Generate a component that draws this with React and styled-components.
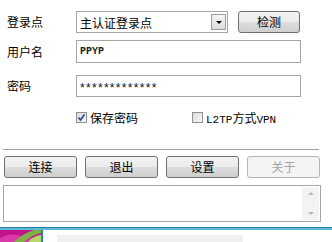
import React from 'react';
import styled, { createGlobalStyle } from 'styled-components';

const GlobalStyle = createGlobalStyle`
  html, body { margin: 0; padding: 0; background: #fff; }
  body { font-family: "Noto Sans CJK SC", "Liberation Sans", sans-serif; }
`;

const Window = styled.div`
  width: 332px;
  height: 242px;
  overflow: hidden;
  background: #fff;
  display: flex;
  flex-direction: column;
  font-size: 12px;
  color: #000;
`;

const Form = styled.div`
  display: flex;
  flex-direction: column;
  padding-top: 11px;
`;

const Row = styled.div`
  display: flex;
  align-items: center;
  height: ${p => p.h}px;
  margin-bottom: ${p => p.mb || 0}px;
`;

const Label = styled.div`
  width: 69px;
  padding-left: 7px;
  font-size: 12px;
  line-height: 14px;
`;

const Select = styled.div`
  box-sizing: border-box;
  width: 152px;
  height: 22px;
  border: 1px solid #a5a5a5;
  display: flex;
  align-items: center;
  justify-content: space-between;
  padding: 0 1px 0 3px;
  font-size: 12px;
`;

const DropBtn = styled.div`
  box-sizing: border-box;
  width: 15px;
  height: 16px;
  border: 1px solid #9a9a9a;
  background: linear-gradient(#f6f6f6, #dcdcdc);
  display: flex;
  align-items: center;
  justify-content: center;
`;

const Caret = styled.div`
  width: 0;
  height: 0;
  border-left: 3px solid transparent;
  border-right: 3px solid transparent;
  border-top: 3px solid #000;
`;

const Button = styled.button`
  box-sizing: border-box;
  width: ${p => p.w || 73}px;
  height: 22px;
  margin: 0;
  padding: 0;
  border: 1px solid ${p => (p.disabled ? '#b5b5b5' : '#707070')};
  border-radius: 3px;
  background: ${p => (p.disabled
    ? '#f4f4f4'
    : 'linear-gradient(#f3f3f3 0%, #ebebeb 50%, #dddddd 51%, #cfcfcf 100%)')};
  color: ${p => (p.disabled ? '#a3a3a3' : '#000')};
  font-family: "Noto Sans CJK SC", sans-serif;
  font-size: 12px;
  line-height: 20px;
`;

const Input = styled.div`
  box-sizing: border-box;
  width: 225px;
  height: ${p => p.h}px;
  border: 1px solid #a5a5a5;
  display: flex;
  align-items: center;
  padding-left: 3px;
  font-family: "Liberation Mono", monospace;
  font-size: 10px;
  font-weight: bold;
  color: #222;
`;

const Stars = styled.span`
  font-family: "Liberation Sans", sans-serif;
  font-size: 12px;
  font-weight: normal;
  letter-spacing: 1.3px;
  color: #111;
  padding-top: 3px;
`;

const CheckRow = styled.div`
  display: flex;
  align-items: center;
  height: 14px;
  padding-left: 76px;
`;

const Check = styled.label`
  display: flex;
  align-items: center;
  gap: 3px;
  width: ${p => p.w}px;
  font-size: 12px;
`;

const Box = styled.span`
  box-sizing: border-box;
  width: 11px;
  height: 11px;
  border: 1px solid #8e8f8f;
  background: linear-gradient(135deg, #dcdcdc, #f8f8f8);
  display: flex;
  align-items: center;
  justify-content: center;
`;

const Mono = styled.span`
  font-family: "Liberation Mono", monospace;
  font-size: 11px;
`;

const Separator = styled.div`
  margin: 25px 13px 0 3px;
  height: 1px;
  background: #a0a0a0;
`;

const ButtonRow = styled.div`
  display: flex;
  gap: 8px;
  padding: 6px 0 0 4px;
`;

const LogArea = styled.div`
  box-sizing: border-box;
  margin: 7px 0 0 3px;
  width: 318px;
  height: 41px;
  border: 1px solid #a5a5a5;
  display: flex;
  justify-content: flex-end;
  padding: 1px;
`;

const Scroll = styled.div`
  width: 17px;
  background: #f3f3f3;
  display: flex;
  flex-direction: column;
  justify-content: space-between;
  align-items: center;
  padding: 5px 0;
`;

const Arrow = styled.div`
  width: 0;
  height: 0;
  border-left: 3px solid transparent;
  border-right: 3px solid transparent;
  ${p => (p.up ? 'border-bottom: 3px solid #b8b8b8;' : 'border-top: 3px solid #b8b8b8;')}
`;

const Strip = styled.div`
  margin-top: 5px;
  display: flex;
  flex-direction: column;
`;

const BlueLine = styled.div`
  height: 2px;
  border-top: 1px solid #1f7fa6;
  background: #5fb8d8;
`;

const Taskbar = styled.div`
  display: flex;
  height: 12px;
  align-items: stretch;
`;

const Thumb = styled.div`
  width: 41px;
  display: flex;
`;

const Divider = styled.div`
  width: 2px;
  background: #1e86b2;
`;

const Tray = styled.div`
  margin: 5px 0 0 14px;
  width: 186px;
  background: #f0f0f0;
`;

export default function App() {
  return (
    <Window>
      <GlobalStyle />
      <Form>
        <Row h={22} mb={7}>
          <Label>登录点</Label>
          <Select>
            <span>主认证登录点</span>
            <DropBtn><Caret /></DropBtn>
          </Select>
          <div style={{ width: 10 }} />
          <Button w={62}>检测</Button>
        </Row>
        <Row h={23} mb={12}>
          <Label>用户名</Label>
          <Input h={23}>PPYP</Input>
        </Row>
        <Row h={22} mb={13}>
          <Label>密码</Label>
          <Input h={22}><Stars>*************</Stars></Input>
        </Row>
        <CheckRow>
          <Check w={116}>
            <Box>
              <svg width="9" height="9" viewBox="0 0 9 9">
                <path d="M1.5 4.5 L3.5 7 L7.5 1.5" stroke="#2a4f9c" strokeWidth="1.8" fill="none" />
              </svg>
            </Box>
            保存密码
          </Check>
          <Check w={120}>
            <Box />
            <span><Mono>L2TP</Mono>方式<Mono>VPN</Mono></span>
          </Check>
        </CheckRow>
      </Form>
      <Separator />
      <ButtonRow>
        <Button>连接</Button>
        <Button>退出</Button>
        <Button>设置</Button>
        <Button disabled>关于</Button>
      </ButtonRow>
      <LogArea>
        <Scroll>
          <Arrow up />
          <Arrow />
        </Scroll>
      </LogArea>
      <Strip>
        <BlueLine />
        <Taskbar>
          <Thumb>
            <svg width="41" height="12" viewBox="0 0 41 12">
              <rect width="41" height="12" fill="#c2148a" />
              <path d="M0 8 Q10 2 22 6 T41 4 L41 12 L0 12 Z" fill="#d93aa8" />
              <path d="M14 12 Q22 4 34 0 L41 0 L41 3 Q30 6 24 12 Z" fill="#7cb342" />
              <path d="M28 12 Q33 6 41 5 L41 12 Z" fill="#b7d96a" />
            </svg>
          </Thumb>
          <Divider />
          <Tray />
        </Taskbar>
      </Strip>
    </Window>
  );
}
